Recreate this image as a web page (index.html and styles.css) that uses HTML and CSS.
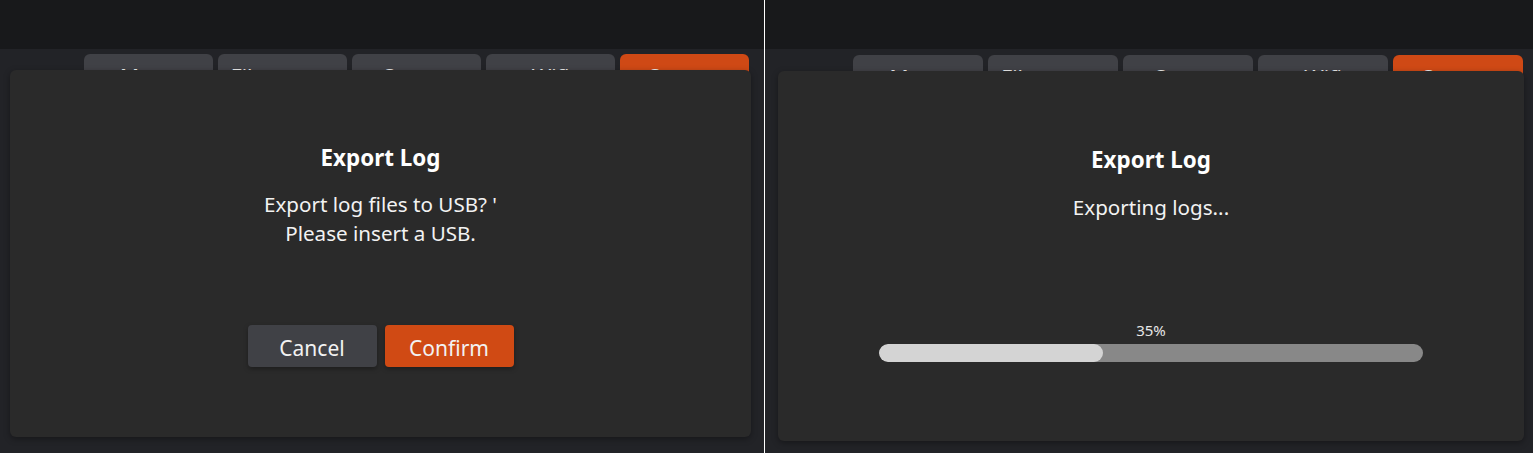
FILE: index.html
```html
<!DOCTYPE html>
<html lang="en">
<head>
<meta charset="utf-8">
<title>Export Log</title>
<link rel="stylesheet" href="styles.css">
</head>
<body>
<div class="screen">
  <section class="panel panel-left">
    <div class="topbar"></div>
    <nav class="tabs">
      <div class="tab">Menu</div>
      <div class="tab">File export</div>
      <div class="tab">Screen</div>
      <div class="tab">Wifi</div>
      <div class="tab tab-active">System</div>
    </nav>
    <div class="dialog">
      <h2 class="dialog-title">Export Log</h2>
      <p class="dialog-message">Export log files to USB? '<br>Please insert a USB.</p>
      <div class="dialog-actions">
        <button class="btn btn-cancel">Cancel</button>
        <button class="btn btn-confirm">Confirm</button>
      </div>
    </div>
  </section>
  <div class="divider"></div>
  <section class="panel panel-right">
    <div class="topbar"></div>
    <nav class="tabs">
      <div class="tab">Menu</div>
      <div class="tab">File export</div>
      <div class="tab">Screen</div>
      <div class="tab">Wifi</div>
      <div class="tab tab-active">System</div>
    </nav>
    <div class="dialog">
      <h2 class="dialog-title">Export Log</h2>
      <p class="dialog-message">Exporting logs...</p>
      <div class="progress">
        <div class="progress-label">35%</div>
        <div class="progress-track"><div class="progress-fill" style="width: 41.2%"></div></div>
      </div>
    </div>
  </section>
</div>
</body>
</html>
```
FILE: styles.css
```css
* { box-sizing: border-box; }
html, body { margin: 0; padding: 0; }
body {
  background: #222327;
  font-family: "Noto Sans", "Open Sans", sans-serif;
  color: #f2f2f2;
  width: 1533px;
  height: 453px;
  overflow: hidden;
}
.screen {
  display: flex;
  height: 453px;
}
.panel {
  position: relative;
  height: 453px;
  background: #222327;
  overflow: hidden;
}
.panel-left { width: 764px; }
.panel-right { width: 768px; }
.divider {
  width: 1px;
  background: #ffffff;
}
.topbar {
  height: 49px;
  background: #18191b;
}
.tabs {
  display: flex;
  justify-content: flex-end;
  gap: 5px;
  margin-top: 5px;
}
.panel-left .tabs { padding-right: 15px; }
.panel-right .tabs { padding-right: 10px; margin-top: 6px; }
.tab {
  width: 129px;
  height: 40px;
  background: #404146;
  border-radius: 6px 6px 0 0;
  font-size: 21px;
  line-height: 20px;
  padding-top: 13px;
  text-align: center;
  color: #eeeeee;
}
.panel-right .tab { width: 130px; }
.tab-active { background: #cf4915; }

.dialog {
  position: absolute;
  background: #2a2a2a;
  border-radius: 6px;
  box-shadow: 0 2px 6px rgba(0, 0, 0, 0.35);
  display: flex;
  flex-direction: column;
  align-items: center;
  text-align: center;
}
.panel-left .dialog {
  left: 10px;
  top: 70px;
  width: 741px;
  height: 367px;
  padding-top: 73px;
}
.panel-right .dialog {
  left: 13px;
  top: 71px;
  width: 746px;
  height: 370px;
  padding-top: 74px;
}
.dialog-title {
  margin: 0;
  font-size: 22.4px;
  line-height: 30px;
  font-weight: 700;
  color: #ffffff;
}
.dialog-message {
  margin: 17px 0 0;
  font-size: 20.6px;
  line-height: 29px;
  font-weight: 400;
  color: #f2f2f2;
}
.panel-right .dialog-message { margin-top: 18px; }
.dialog-actions {
  display: flex;
  gap: 8px;
  margin-top: 77px;
}
.btn {
  width: 129px;
  height: 42px;
  border: none;
  border-radius: 4px;
  font-family: inherit;
  font-size: 21px;
  line-height: 42px;
  padding: 2px 0 0;
  color: #f2f2f2;
  box-shadow: 0 2px 5px rgba(0, 0, 0, 0.3);
}
.btn-cancel { background: #404146; }
.btn-confirm { background: #d04a14; }

.progress {
  margin-top: 98px;
  width: 544px;
  display: flex;
  flex-direction: column;
  align-items: center;
}
.progress-label {
  font-size: 15px;
  line-height: 20px;
  color: #e6e6e6;
  margin-bottom: 4px;
}
.progress-track {
  width: 100%;
  height: 18px;
  border-radius: 9px;
  background: #888888;
  overflow: hidden;
}
.progress-fill {
  height: 100%;
  border-radius: 9px;
  background: #d4d4d4;
}
```
